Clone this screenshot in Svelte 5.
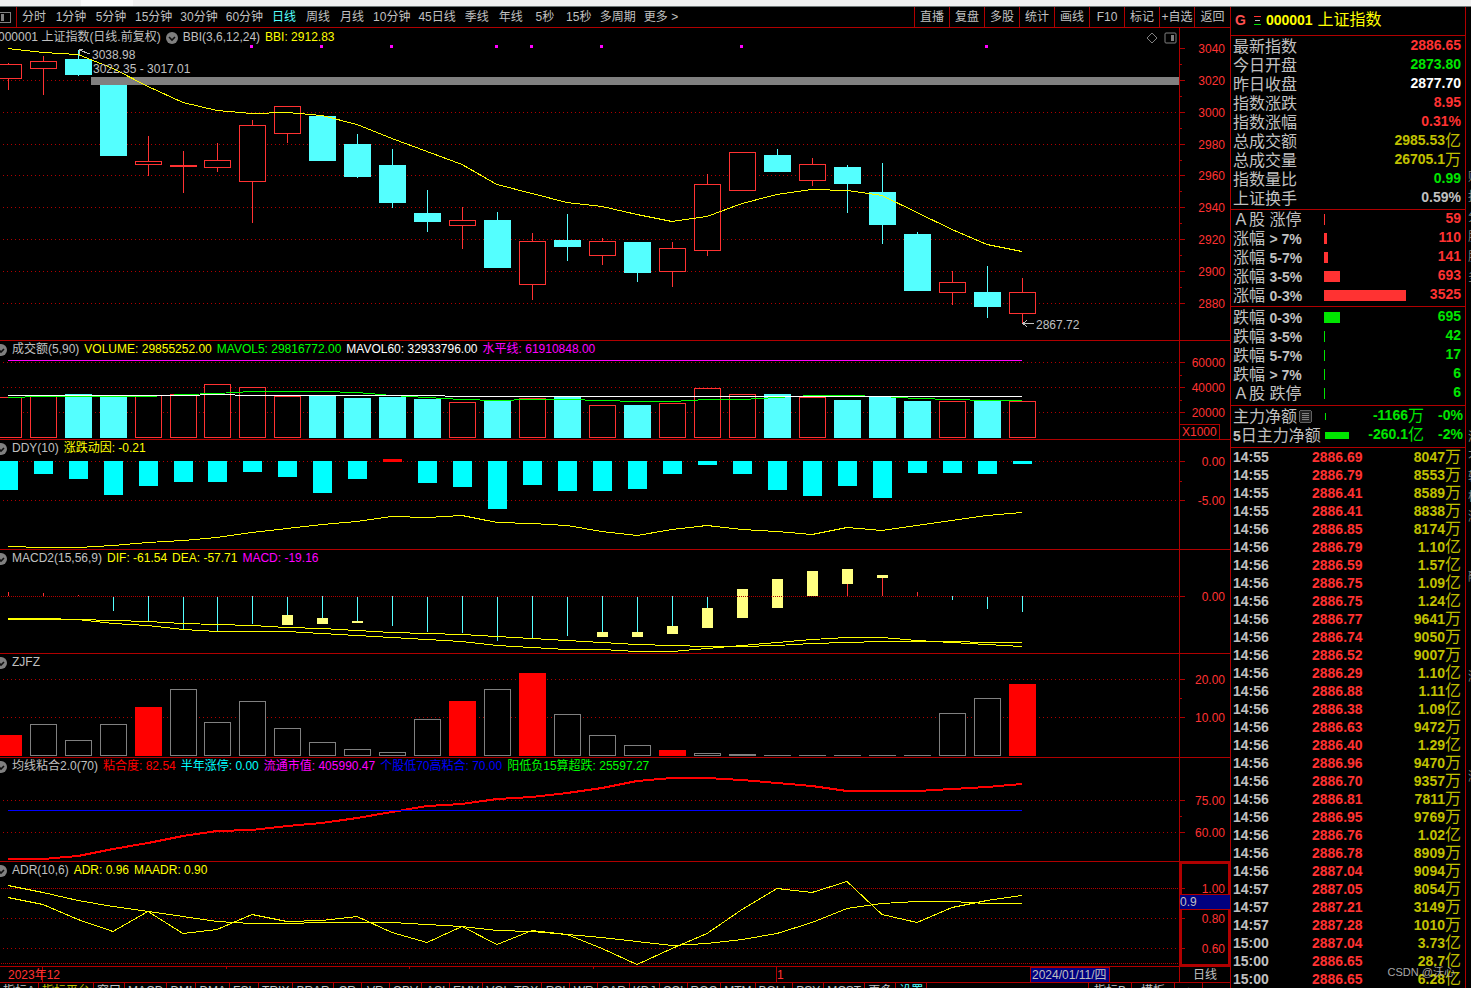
<script>
  const RED = '#ff3232';
  const CYAN = '#54ffff';
  const LINE = '#b00000';

  const periods = ['分时', '1分钟', '5分钟', '15分钟', '30分钟', '60分钟', '日线', '周线', '月线', '10分钟', '45日线', '季线', '年线', '5秒', '15秒', '多周期', '更多 >'];
  const tools = ['直播', '复盘', '多股', '统计', '画线', 'F10', '标记', '+自选', '返回'];
  const tabs = ['指标A', '指标平台', '窗口', 'MACD', 'DMI', 'DMA', 'FSL', 'TRIX', 'BRAR', 'CR', 'VR', 'OBV', 'ASI', 'EMV', 'VOL-TDX', 'RSI', 'WR', 'SAR', 'KDJ', 'CCI', 'ROC', 'MTM', 'BOLL', 'PSY', 'MCST', '更多', '设置'];

  let period = $state('日线');

  // centre of the i-th day column
  const cx = i => 7 + 35 * i + (i < 6 ? 1 : 0);
  const points = ys => ys.map((y, i) => `${cx(i)},${y}`).join(' ');

  // [up, high, body top, body bottom, low]
  const candles = [
    [1, 63, 64, 79, 90], [1, 56, 61, 69, 95], [0, 50, 59, 75, 76], [0, 85, 85, 156, 156],
    [1, 136, 161, 165, 176], [1, 151, 165, 167, 193], [1, 143, 160, 168, 172], [1, 120, 125, 182, 223],
    [1, 106, 106, 134, 143], [0, 116, 116, 161, 161], [0, 134, 144, 177, 178], [0, 149, 165, 203, 208],
    [0, 190, 213, 222, 232], [1, 207, 220, 226, 249], [0, 212, 220, 268, 268], [1, 233, 241, 285, 300],
    [0, 214, 240, 247, 261], [1, 238, 241, 256, 265], [0, 242, 242, 273, 282], [1, 242, 248, 272, 287],
    [1, 174, 184, 251, 256], [1, 152, 152, 191, 191], [0, 149, 155, 172, 172], [1, 158, 164, 181, 186],
    [0, 165, 167, 184, 213], [0, 163, 192, 225, 244], [0, 232, 234, 291, 291], [1, 271, 282, 293, 305],
    [0, 266, 292, 307, 318], [1, 278, 292, 314, 323]
  ];
  const bbi = [48, 52, 54, 68, 86, 102, 110, 113, 112, 115, 124, 138, 151, 164, 184, 193, 202, 206, 214, 221, 216, 203, 194, 189, 190, 195, 212, 229, 244, 251];
  const marks = [7, 9, 11, 14, 15, 17, 21, 28];

  const volTops = [397, 396, 394, 396, 395, 394, 384, 387, 396, 395, 398, 397, 399, 402, 401, 398, 396, 405, 405, 403, 388, 394, 394, 397, 400, 397, 401, 401, 401, 401];
  const mavol5 = [397, 396, 396, 396, 396, 394, 393, 391, 391, 391, 392, 395, 397, 399, 400, 399, 399, 400, 401, 401, 399, 399, 397, 395, 395, 396, 398, 399, 400, 400];
  const mavol60 = [395, 395, 395, 395, 395, 395, 394, 395, 395, 395, 395, 395, 395, 396, 396, 396, 396, 396, 396, 396, 396, 396, 396, 396, 396, 396, 396, 396, 396, 396];

  const ddyEnds = [490, 474, 479, 495, 486, 482, 482, 472, 477, 493, 479, 0, 483, 487, 509, 485, 491, 491, 489, 474, 465, 474, 490, 496, 486, 498, 473, 473, 474, 464];
  const ddyLine = [546, 547, 547, 545, 542, 540, 537, 532, 528, 524, 521, 516, 517, 515, 522, 523, 525, 531, 535, 529, 525, 529, 531, 534, 527, 530, 525, 520, 515, 512];

  // [stick end, box top, box bottom]
  const macd = [
    [592], [593], [595], [611], [621], [629], [631], [624], [615, 615, 625], [618, 618, 624],
    [621, 621, 623], [626], [632], [633], [641], [638], [636], [632, 632, 637], [632, 632, 637], [626, 626, 634],
    [608, 608, 628], [596, 589, 618], [596, 579, 608], [596, 571, 596], [584, 569, 584], [578, 575, 578], [592], [600], [609], [612]
  ];
  const dea = [619, 619, 619, 620, 621, 623, 624, 625, 627, 628, 630, 632, 633, 634, 636, 638, 640, 642, 644, 645, 646, 646, 645, 643, 642, 641, 641, 641, 642, 642];
  const dif = [618, 618, 619, 623, 625, 629, 631, 631, 631, 633, 635, 637, 639, 641, 645, 647, 649, 649, 651, 651, 648, 645, 642, 639, 637, 637, 640, 642, 644, 646];

  const zjfz = [735, 724, 740, 724, 707, 689, 722, 701, 728, 742, 749, 752, 719, 701, 689, 673, 714, 735, 745, 750, 753, 754, 755, 755, 755, 755, 755, 713, 698, 684];
  const zjfzRed = [0, 4, 13, 15, 19, 29];

  const nianhe = [859, 859, 856, 849, 843, 836, 831, 830, 826, 823, 818, 812, 806, 804, 799, 797, 793, 788, 781, 778, 778, 780, 783, 786, 791, 791, 791, 789, 787, 784];

  const adr = [897, 904, 919, 931, 911, 933, 929, 914, 921, 920, 916, 932, 942, 926, 944, 930, 934, 948, 964, 948, 933, 909, 888, 892, 881, 914, 922, 907, 900, 895];
  const maadr = [885, 892, 900, 906, 911, 916, 921, 923, 923, 922, 922, 922, 924, 926, 930, 931, 934, 937, 941, 945, 943, 939, 933, 922, 908, 903, 901, 901, 903, 903];

  // origin is where the panel's own y axis starts counting
  const panels = [
    {
      id: 'kline', origin: 28, height: 312,
      legend: [['BBI(3,6,12,24)', '#c0c0c0'], ['BBI: 2912.83', '#ffff00']],
      labels: [[48, '3040'], [80, '3020'], [112, '3000'], [144, '2980'], [175, '2960'], [207, '2940'], [239, '2920'], [271, '2900'], [303, '2880']],
      minor: [64, 96, 128, 160, 191, 223, 255, 287],
      grid: [80, 112, 144, 175, 207, 239, 271, 303]
    },
    {
      id: 'vol', origin: 341, height: 98,
      legend: [['成交额(5,90)', '#c0c0c0'], ['VOLUME: 29855252.00', '#ffff00'], ['MAVOL5: 29816772.00', '#00ff00'], ['MAVOL60: 32933796.00', '#ffffff'], ['水平线: 61910848.00', '#ff00ff']],
      labels: [[362, '60000'], [387, '40000'], [412, '20000']],
      minor: [375, 400],
      grid: [362, 387, 412]
    },
    {
      id: 'ddy', origin: 440, height: 109,
      legend: [['DDY(10)', '#c0c0c0'], ['涨跌动因: -0.21', '#ffff00']],
      labels: [[461, '0.00'], [500, '-5.00']],
      minor: [481],
      grid: [461, 500]
    },
    {
      id: 'macd', origin: 550, height: 103,
      legend: [['MACD2(15,56,9)', '#c0c0c0'], ['DIF: -61.54', '#ffff00'], ['DEA: -57.71', '#ffff00'], ['MACD: -19.16', '#ff00ff']],
      labels: [[596, '0.00']],
      minor: [],
      grid: []
    },
    {
      id: 'zjfz', origin: 654, height: 103,
      legend: [['ZJFZ', '#c0c0c0']],
      labels: [[679, '20.00'], [717, '10.00']],
      minor: [698],
      grid: [679, 717]
    },
    {
      id: 'nianhe', origin: 758, height: 103,
      legend: [['均线粘合2.0(70)', '#c0c0c0'], ['粘合度: 82.54', '#ff0000'], ['半年涨停: 0.00', '#00ffff'], ['流通市值: 405990.47', '#ff00ff'], ['个股低70高粘合: 70.00', '#0000ff'], ['阳低负15算超跌: 25597.27', '#00ff00']],
      labels: [[800, '75.00'], [832, '60.00']],
      minor: [816],
      grid: [800, 832]
    },
    {
      id: 'adr', origin: 862, height: 104,
      legend: [['ADR(10,6)', '#c0c0c0'], ['ADR: 0.96', '#ffff00'], ['MAADR: 0.90', '#ffff00']],
      labels: [[888, '1.00'], [918, '0.80'], [948, '0.60']],
      minor: [933],
      grid: [918, 948]
    }
  ];

  const quote = [
    ['最新指数', '2886.65', '', 'up'],
    ['今日开盘', '2873.80', '', 'down'],
    ['昨日收盘', '2877.70', '', 'flat'],
    ['指数涨跌', '8.95', '', 'up'],
    ['指数涨幅', '0.31%', '', 'up'],
    ['总成交额', '2985.53', '亿', 'amount'],
    ['总成交量', '26705.1', '万', 'amount'],
    ['指数量比', '0.99', '', 'down'],
    ['上证换手', '0.59%', '', 'plain']
  ];
  const rises = [['Ａ股 涨停', '', 1, 59], ['涨幅', '> 7%', 3, 110], ['涨幅', '5-7%', 4, 141], ['涨幅', '3-5%', 16, 693], ['涨幅', '0-3%', 82, 3525]];
  const falls = [['跌幅', '0-3%', 16, 695], ['跌幅', '3-5%', 1, 42], ['跌幅', '5-7%', 1, 17], ['跌幅', '> 7%', 1, 6], ['Ａ股 跌停', '', 1, 6]];

  const ticks = `14:55 2886.69 8047 万
14:55 2886.79 8553 万
14:55 2886.41 8589 万
14:55 2886.41 8838 万
14:56 2886.85 8174 万
14:56 2886.79 1.10 亿
14:56 2886.59 1.57 亿
14:56 2886.75 1.09 亿
14:56 2886.75 1.24 亿
14:56 2886.77 9641 万
14:56 2886.74 9050 万
14:56 2886.52 9007 万
14:56 2886.29 1.10 亿
14:56 2886.88 1.11 亿
14:56 2886.38 1.09 亿
14:56 2886.63 9472 万
14:56 2886.40 1.29 亿
14:56 2886.96 9470 万
14:56 2886.70 9357 万
14:56 2886.81 7811 万
14:56 2886.95 9769 万
14:56 2886.76 1.02 亿
14:56 2886.78 8909 万
14:56 2887.04 9094 万
14:57 2887.05 8054 万
14:57 2887.21 3149 万
14:57 2887.28 1010 万
15:00 2887.04 3.73 亿
15:00 2886.65 28.7 亿
15:00 2886.65 6.28 亿`.split('\n').map(l => l.split(' '));

  // the next window's column, only its edge shows
  const edge = ['财', '报', '分', '股', '股', '多', '', '', '', '', '', '', '', '测', '不', '转', '板', '涨', '', '', '融', '', '', '', '', '涨', '', '', '', '', '涨'];
</script>

{#snippet toggle()}
  <button class="toggle" aria-label="指标菜单">
    <svg width="12" height="12" viewBox="0 0 12 12">
      <circle cx="6" cy="6" r="6" fill="#808080" />
      <path d="M3 5l3 3 3-3" fill="none" stroke="#101010" stroke-width="1.6" />
    </svg>
  </button>
{/snippet}

{#snippet box(i, top, bottom, color, solid)}
  <rect x={cx(i) - 13} y={top} width="27" height={bottom - top} fill={color} />
  {#if !solid && bottom - top > 2}
    <rect x={cx(i) - 12} y={top + 1} width="25" height={bottom - top - 2} fill="#000" />
  {/if}
{/snippet}

{#snippet curve(ys, color, width)}
  <polyline points={points(ys)} fill="none" stroke={color} stroke-width={width} transform="translate(0 {width === 2 ? 0 : 0.5})" />
{/snippet}

{#snippet dist(rows, tone)}
  <table class="group {tone}">
    <tbody>
      {#each rows as [name, range, width, count]}
        <tr>
          <th scope="row">{name}{#if range}&nbsp;<b>{range}</b>{/if}</th>
          <td class="bar-cell"><div class="bar" style:width="{width}px"></div></td>
          <td class="num">{count}</td>
        </tr>
      {/each}
    </tbody>
  </table>
{/snippet}

<div class="app">
  <div class="strip"><div class="strip-tab"></div></div>
  <div class="main">
    <div class="charts">
      <nav class="toolbar">
        <button class="layout-btn" aria-label="侧栏">
          <svg width="12" height="12" viewBox="0 0 12 12" shape-rendering="crispEdges">
            <rect x="-2" y="1" width="12" height="10" fill="none" stroke="#808080" />
            <rect x="1" y="3" width="3" height="7" fill="#808080" />
          </svg>
        </button>
        {#each periods as p}
          <button class="period" class:minutes={p.includes('分钟')} class:active={p === period} onclick={() => (period = p)}>{p}</button>
        {/each}
        <span class="spacer"></span>
        {#each tools as t}
          <button class="tool">{t}</button>
        {/each}
      </nav>

      {#each panels as panel}
        <section class="panel">
          <div class="plot">
            <svg width="100%" height={panel.height} shape-rendering="crispEdges">
              <g transform="translate(0 {-panel.origin})">
                {#each panel.grid as y}
                  <line x1="3" x2="100%" y1={y + 0.5} y2={y + 0.5} stroke={LINE} stroke-dasharray="1 3" />
                {/each}

                {#if panel.id === 'kline'}
                  <rect x="91" y="77" width="100%" height="8" fill="#808080" />
                  {#each candles as [up, high, top, bottom, low], i}
                    <rect x={cx(i)} y={high} width="1" height={low - high} fill={up ? RED : CYAN} />
                    {@render box(i, top, bottom, up ? RED : CYAN, !up)}
                  {/each}
                  {@render curve(bbi, '#ffff00', 1)}
                  {#each marks as i}
                    <rect x={cx(i) - 2} y="45" width="3" height="3" fill="#ff00ff" />
                  {/each}
                  <path d="M90 54l-11-4M79 55v-6h4" fill="none" stroke="#c0c0c0" />
                  <text x="92" y="59">3038.98</text>
                  <text x="93" y="73">3022.35 - 3017.01</text>
                  <path d="M1034 323.5h-11M1027 320l-4 3.5 4 3.5" fill="none" stroke="#c0c0c0" />
                  <text x="1036" y="329">2867.72</text>
                {:else if panel.id === 'vol'}
                  {#each volTops as top, i}
                    {@render box(i, top, 438, candles[i][0] ? RED : CYAN, !candles[i][0])}
                  {/each}
                  <rect x="8" y="360" width="1014" height="1" fill="#ff00ff" />
                  {@render curve(mavol5, '#00ff00', 1)}
                  {@render curve(mavol60, '#ffffff', 1)}
                {:else if panel.id === 'ddy'}
                  {#each ddyEnds as end, i}
                    {#if end}
                      <rect x={cx(i) - 9} y="461" width="19" height={end - 461} fill="#00ffff" />
                    {:else}
                      <rect x={cx(i) - 9} y="459" width="19" height="3" fill="#ff0000" />
                    {/if}
                  {/each}
                  {@render curve(ddyLine, '#ffff00', 1)}
                {:else if panel.id === 'macd'}
                  {#each macd as [end, top, bottom], i}
                    {@const rising = end < 596}
                    <rect x={cx(i)} y={Math.min(end, 596)} width="1" height={Math.abs(end - 596)} fill={rising ? RED : CYAN} />
                    {#if top}
                      <rect x={cx(i) - 5} y={top} width="11" height={bottom - top} fill="#ffff80" />
                    {/if}
                  {/each}
                  <line x1="1" x2="100%" y1="596.5" y2="596.5" stroke={LINE} stroke-dasharray="1 1" />
                  {@render curve(dea, '#ffff00', 1)}
                  {@render curve(dif, '#ffff00', 1)}
                {:else if panel.id === 'zjfz'}
                  {#each zjfz as top, i}
                    {@const solid = zjfzRed.includes(i)}
                    {@render box(i, top, 756, solid ? '#ff0000' : '#808080', solid)}
                  {/each}
                {:else if panel.id === 'nianhe'}
                  {@render curve(nianhe, '#ff0000', 2)}
                  <rect x="8" y="810" width="1014" height="1" fill="#0000ff" />
                {:else}
                  {#each [888, 963] as y}
                    <line x1="1" x2="100%" y1={y + 0.5} y2={y + 0.5} stroke={LINE} stroke-dasharray="1 1" />
                  {/each}
                  {@render curve(adr, '#ffff00', 1)}
                  {@render curve(maadr, '#ffff00', 1)}
                {/if}
              </g>
            </svg>

            <div class="legend" class:first={panel.id === 'kline'}>
              {#if panel.id === 'kline'}
                <span class="title">000001 上证指数(日线.前复权)</span>
              {/if}
              {@render toggle()}
              {#each panel.legend as [text, color]}
                <span style:color={color}>{text}</span>
              {/each}
              {#if panel.id === 'kline'}
                <span class="spacer"></span>
                <svg class="corner" width="26" height="12" viewBox="0 0 26 12" fill="none" stroke="#808080">
                  <path d="M-3 6l5-5 5 5-5 5z" />
                  <rect x="15" y="1" width="11" height="10" rx="1" />
                  <rect x="21" y="3" width="3" height="6" fill="#808080" stroke="none" />
                </svg>
              {/if}
            </div>
          </div>

          <div class="axis" class:boxed={panel.id === 'adr'}>
            <svg width="50" height={panel.height} shape-rendering="crispEdges">
              <g transform="translate(0 {-panel.origin})">
                {#each panel.labels as [y, text]}
                  <rect x="0" {y} width="5" height="1" fill={LINE} />
                  <text class="scale" x="45" y={y + 5} text-anchor="end">{text}</text>
                {/each}
                {#each panel.minor as y}
                  <rect x="0" {y} width="2" height="1" fill={LINE} />
                {/each}
                {#if panel.id === 'vol'}
                  <rect x="-1" y="424.5" width="40.5" height="15" fill="none" stroke={LINE} />
                  <text class="scale" x="2" y="436">X1000</text>
                {/if}
              </g>
            </svg>
            {#if panel.id === 'adr'}
              <span class="cursor-value">0.9</span>
            {/if}
          </div>
        </section>
      {/each}

      <div class="timeline">
        <svg width="100%" height="15" shape-rendering="crispEdges">
          <g fill={LINE}>
            <rect x="42" y="0" width="1" height="15" />
            <rect x="226" y="0" width="1" height="2" />
            <rect x="409" y="0" width="1" height="2" />
            <rect x="593" y="0" width="1" height="2" />
            <rect x="776" y="0" width="1" height="15" />
          </g>
          <text class="scale" x="8" y="12">2023年12</text>
          <text class="scale" x="777" y="12">1</text>
          <rect x="1030" y="0" width="79" height="15" fill="#000080" stroke={LINE} />
          <text x="1032" y="12">2024/01/11/四</text>
        </svg>
        <span class="unit-cell">日线</span>
      </div>

      <nav class="tabs">
        {#each tabs as t}
          <button class="tab" class:yellow={t === '指标平台'} class:cyan={t === '设置'}>{t}</button>
        {/each}
        <span class="spacer"></span>
        <button class="tab wide">指标B</button>
        <button class="tab wide">模板</button>
        <button class="tab sign">+</button>
        <button class="tab sign">-</button>
      </nav>
    </div>

    <aside class="side">
      <header class="symbol">
        <span class="g">G</span>
        <svg width="8" height="11" viewBox="0 0 8 11" shape-rendering="crispEdges">
          <rect x="1" y="1" width="7" height="1" fill="#ff3232" />
          <rect x="2" y="5" width="5" height="1" fill="#c0c0c0" />
          <rect x="1" y="9" width="7" height="1" fill="#00e600" />
        </svg>
        <b>000001</b>
        <span>上证指数</span>
      </header>

      <table class="group quote">
        <tbody>
          {#each quote as [name, value, unit, tone]}
            <tr class={tone}>
              <th scope="row">{name}</th>
              <td class="num">{value}<i>{unit}</i></td>
            </tr>
          {/each}
        </tbody>
      </table>

      {@render dist(rises, 'up')}
      {@render dist(falls, 'down')}

      <table class="group flow down">
        <tbody>
          <tr>
            <th scope="row">
              主力净额
              <svg width="13" height="13" viewBox="0 0 13 13" shape-rendering="crispEdges">
                <rect x="0.5" y="0.5" width="12" height="12" rx="2" fill="#202020" stroke="#606060" />
                <path d="M3 3.5h7M3 5.5h7M3 7.5h7M3 9.5h7" stroke="#808080" />
              </svg>
            </th>
            <td class="bar-cell"><div class="bar" style:width="1px"></div></td>
            <td class="num">-1166<i>万</i></td>
            <td class="num">-0%</td>
          </tr>
          <tr>
            <th scope="row"><b>5</b>日主力净额</th>
            <td class="bar-cell"><div class="bar" style:width="24px"></div></td>
            <td class="num">-260.1<i>亿</i></td>
            <td class="num">-2%</td>
          </tr>
        </tbody>
      </table>

      <table class="ticks">
        <tbody>
          {#each ticks as [time, price, amount, unit]}
            <tr>
              <td class="time">{time}</td>
              <td class="price">{price}</td>
              <td class="num">{amount}<i>{unit}</i></td>
            </tr>
          {/each}
        </tbody>
      </table>
      <span class="watermark">CSDN @沃心</span>
    </aside>

    <div class="edge">
      {#each edge as ch}
        <span>{ch}</span>
      {/each}
    </div>
  </div>
</div>

<style>
  :global(body) {
    margin: 0;
    background: #000;
  }

  .app {
    display: flex;
    flex-direction: column;
    height: 100vh;
    overflow: hidden;
    background: #000;
    color: #c0c0c0;
    font-family: "Liberation Sans", "Noto Sans CJK SC", sans-serif;
    font-size: 12px;
  }

  button {
    margin: 0;
    padding: 0;
    border: 0;
    background: transparent;
    color: inherit;
    font: inherit;
    white-space: nowrap;
    cursor: pointer;
  }

  svg {
    display: block;
  }

  text {
    fill: #c0c0c0;
    font-size: 12px;
  }

  .scale {
    fill: #ff3232;
  }

  .spacer {
    flex: 1;
  }

  .strip {
    height: 6px;
    flex-shrink: 0;
    background: #f0f0f0;
    border-bottom: 1px solid #707878;
  }

  .strip-tab {
    width: 52px;
    height: 6px;
    margin-left: 81px;
    background: #fafafa;
  }

  .main {
    display: flex;
    flex: 1;
    min-height: 0;
  }

  .charts {
    flex: 1;
    min-width: 0;
    overflow: hidden;
  }

  .toolbar {
    display: flex;
    height: 20px;
    border-bottom: 1px solid #b00000;
  }

  .layout-btn {
    width: 17px;
    border-right: 1px solid #b00000;
  }

  .period {
    min-width: 34px;
    padding: 1px 4px 0;
    line-height: 19px;
  }

  .period.minutes {
    min-width: 40px;
  }

  .period.active {
    color: #54ffff;
  }

  .tool {
    width: 35px;
    padding-top: 1px;
    line-height: 19px;
    border-left: 1px solid #b00000;
  }

  .tool:last-child {
    width: 36px;
  }

  .panel {
    display: flex;
    border-bottom: 1px solid #b00000;
  }

  .plot {
    display: grid;
    flex: 1;
    min-width: 0;
    overflow: hidden;
  }

  .plot > * {
    grid-area: 1 / 1;
    min-width: 0;
  }

  .legend {
    display: flex;
    align-items: center;
    gap: 5px;
    height: 17px;
    margin-left: -5px;
    line-height: 17px;
    white-space: nowrap;
  }

  .legend.first {
    margin-left: -2px;
    margin-top: 1px;
  }

  .corner {
    margin-right: 3px;
    overflow: visible;
  }

  .axis {
    position: relative;
    box-sizing: border-box;
    width: 51px;
    border-left: 1px solid #b00000;
  }

  .axis.boxed {
    box-shadow: inset 0 0 0 2px #b00000;
  }

  .cursor-value {
    position: absolute;
    top: 32px;
    left: 0;
    right: 0;
    height: 14px;
    line-height: 14px;
    background: #000080;
    border-top: 1px solid #b00000;
    border-bottom: 1px solid #b00000;
  }

  .timeline {
    display: flex;
    height: 15px;
    border-bottom: 1px solid #b00000;
  }

  .timeline svg {
    flex: 1;
    min-width: 0;
  }

  .unit-cell {
    width: 50px;
    line-height: 16px;
    text-align: center;
    border-left: 1px solid #b00000;
  }

  .tabs {
    display: flex;
    height: 16px;
  }

  .tab {
    min-width: 28px;
    padding: 0 3px;
    line-height: 16px;
    border-right: 1px solid #b00000;
  }

  .tab.yellow {
    color: #c0c000;
  }

  .tab.cyan {
    color: #54ffff;
  }

  .tab.wide {
    width: 43px;
    border-right: 0;
    border-left: 1px solid #b00000;
  }

  .tab.sign {
    width: 25px;
    border-right: 0;
    border-left: 1px solid #b00000;
  }

  .side {
    position: relative;
    width: 234px;
    flex-shrink: 0;
    border-left: 1px solid #b00000;
    border-right: 1px solid #b00000;
    overflow: hidden;
  }

  .symbol {
    display: flex;
    align-items: center;
    gap: 5px;
    height: 26px;
    padding: 0 0 2px 4px;
    border-bottom: 1px solid #b00000;
    color: #ffff00;
    font-size: 16px;
    line-height: 24px;
  }

  .symbol b,
  .symbol .g {
    font-size: 14px;
    font-weight: 700;
  }

  .symbol .g {
    color: #ff5050;
    margin-right: 2px;
  }

  table {
    width: 100%;
    border-collapse: collapse;
    table-layout: fixed;
  }

  tr {
    height: 19px;
  }

  th,
  td {
    padding: 0;
    white-space: nowrap;
    line-height: 18px;
  }

  th {
    width: 93px;
    padding-left: 2px;
    text-align: left;
    font-size: 16px;
    font-weight: 400;
    color: #c0c0c0;
  }

  th b,
  td {
    font-size: 14px;
    font-weight: 700;
  }

  i {
    font-size: 16px;
    font-style: normal;
    font-weight: 400;
  }

  .num {
    text-align: right;
    padding-right: 4px;
  }

  .group {
    display: block;
    padding: 1px 0 2px;
    border-bottom: 1px solid #b00000;
  }

  .group tbody {
    display: block;
  }

  .group tr {
    display: flex;
    align-items: center;
  }

  .group th {
    box-sizing: border-box;
    width: 93px;
  }

  .group .num {
    flex: 1;
    padding-bottom: 2px;
    line-height: 17px;
  }

  .group i {
    vertical-align: -1px;
    line-height: 16px;
  }

  .quote {
    padding: 1px 0;
  }

  .quote + .group {
    padding: 0 0 1px;
  }

  .bar {
    height: 11px;
  }

  .flow .bar {
    height: 7px;
  }

  .flow .bar-cell {
    width: 24px;
    margin-left: 1px;
  }

  .flow th svg {
    display: inline-block;
    vertical-align: -1px;
    margin-left: -2px;
  }

  .flow .num:nth-child(3) {
    padding-right: 0;
  }

  .flow .num:last-child {
    flex: 0 0 39px;
    padding-right: 2px;
  }

  .up {
    color: #ff3232;
  }

  .up .bar {
    background: #ff3232;
  }

  .down {
    color: #00e600;
  }

  .down .bar {
    background: #00e600;
  }

  .flat {
    color: #fff;
  }

  .amount {
    color: #c0c000;
  }

  .ticks tr {
    height: 18px;
  }

  .ticks .time {
    width: 79px;
    padding-left: 2px;
  }

  .ticks .price {
    color: #ff3232;
  }

  .ticks .num {
    color: #c0c000;
  }

  .watermark {
    position: absolute;
    right: 10px;
    bottom: 8px;
    font-size: 11px;
    line-height: 16px;
    color: #a8a8a8;
  }

  .edge {
    display: flex;
    flex-direction: column;
    width: 5px;
    padding-top: 160px;
    overflow: hidden;
    color: #808080;
  }

  .edge span {
    width: 12px;
    height: 20px;
    flex-shrink: 0;
    line-height: 20px;
    margin-left: 2px;
  }
</style>
